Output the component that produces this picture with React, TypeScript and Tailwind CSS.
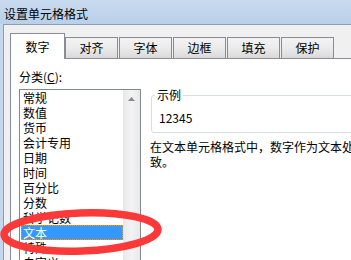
import React from "react";

export default function App() {
  const items = [
    "常规",
    "数值",
    "货币",
    "会计专用",
    "日期",
    "时间",
    "百分比",
    "分数",
    "科学记数",
    "文本",
    "特殊",
    "自定义",
  ];
  const tabs = ["对齐", "字体", "边框", "填充", "保护"];
  return (
    <div className="relative w-[351px] h-[260px] overflow-hidden bg-[#f0f0f0] text-[12px] text-black font-['Noto_Sans_CJK_SC','Noto_Sans',sans-serif]">
      <div className="h-[24px] flex items-center pl-[4px] pt-[3px] bg-linear-to-b from-[#c8daef] to-[#b9d0ea] leading-[14px]">
        设置单元格格式
      </div>
      <div className="flex h-[236px]">
        <div className="w-[3px] bg-[#c4d7ed] shrink-0" />
        <div className="flex-1 flex flex-col border-l border-t border-[#8d9cae] pl-[6px] pt-[8px]">
          <div className="flex items-end h-[25px]">
            <div className="relative z-10 h-[26px] -mb-[1px] w-[55px] bg-white border border-b-0 border-[#898c95] flex items-center justify-center leading-[14px]">
              数字
            </div>
            {tabs.map((t, i) => (
              <div
                key={t}
                className={`h-[21px] w-[53px] border border-b-0 border-[#898c95] bg-linear-to-b from-[#f3f3f3] via-[#ebebeb] to-[#d9d9d9] flex items-center justify-center leading-[14px] ${
                  i === 0 ? "" : "ml-[1px]"
                }`}
              >
                {t}
              </div>
            ))}
          </div>
          <div className="w-[420px] flex-1 bg-white border-l border-t border-[#898c95] flex pl-[8px] pt-[10px]">
            <div className="w-[122px] shrink-0 flex flex-col">
              <div className="h-[15px] leading-[15px] whitespace-nowrap">
                分类(<span className="underline">C</span>):
              </div>
              <div className="mt-[5px] h-[200px] border border-[#828790] flex">
                <div className="flex-1 flex flex-col">
                  {items.map((it, i) => (
                    <div
                      key={it}
                      className={`h-[15px] ml-[1px] px-[1px] border flex items-center leading-[13px] whitespace-nowrap ${
                        i === 9
                          ? "bg-[#3399ff] text-white border-dotted border-[#e09a4c]"
                          : "border-transparent"
                      }`}
                    >
                      {it}
                    </div>
                  ))}
                </div>
                <div className="w-[17px] shrink-0 bg-linear-to-r from-[#e8e8e8] via-[#f3f3f3] to-[#e8e8e8] flex flex-col items-center">
                  <div className="h-[17px] w-full flex items-center justify-center">
                    <svg width="7" height="4" viewBox="0 0 7 4">
                      <polygon points="3.5,0 7,4 0,4" fill="#8a8a8a" />
                    </svg>
                  </div>
                </div>
              </div>
            </div>
            <div className="ml-[9px] w-[270px] shrink-0 flex flex-col">
              <fieldset className="mt-[20px] ml-[1px] border border-[#d5dfe5] rounded-[3px]">
                <legend className="ml-[3px] px-[2px] leading-[12px]">示例</legend>
                <div className="pl-[7px] pt-[9px] pb-[7px] leading-[15px]">12345</div>
              </fieldset>
              <div className="mt-[6px] leading-[15px] whitespace-nowrap">
                <div>在文本单元格格式中，数字作为文本处理。单元格显示的内容与输入的内容完全一</div>
                <div>致。</div>
              </div>
            </div>
          </div>
        </div>
      </div>
      <svg
        className="absolute left-0 top-0 pointer-events-none"
        width="351"
        height="260"
        viewBox="0 0 351 260"
      >
        <ellipse
          cx="81"
          cy="232"
          rx="77"
          ry="19"
          fill="none"
          stroke="#fb3939"
          strokeWidth="7.5"
          transform="rotate(-2 81 232)"
        />
      </svg>
    </div>
  );
}
